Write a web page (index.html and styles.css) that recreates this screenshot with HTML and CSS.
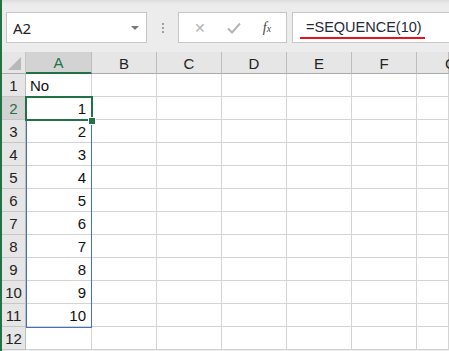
FILE: index.html
```html
<!DOCTYPE html>
<html lang="ja">
<head>
  <meta charset="UTF-8">
  <title>SEQUENCE</title>
  <link rel="stylesheet" href="styles.css">
</head>
<body>
<div class="app">
  <div class="edge"></div>
  <div class="main">
    <div class="formula-bar">
      <div class="name-box">
        <span class="name">A2</span>
        <span class="arrow"></span>
      </div>
      <div class="grip"><i></i><i></i><i></i></div>
      <div class="buttons">
        <span class="btn cancel">&#x2715;</span>
        <svg class="btn check" width="14" height="12" viewBox="0 0 14 12"><path d="M1 6.5 L5 10.5 L13 1.5" fill="none" stroke="#b5b5b5" stroke-width="2"/></svg>
        <span class="btn fx">f<sub>x</sub></span>
      </div>
      <div class="formula">
        <span class="formula-text">=SEQUENCE(10)</span>
      </div>
    </div>

    <div class="sheet">
      <div class="grid">
        <div class="corner"><span class="tri"></span></div>
        <div class="col-head active">A</div>
        <div class="col-head">B</div>
        <div class="col-head">C</div>
        <div class="col-head">D</div>
        <div class="col-head">E</div>
        <div class="col-head">F</div>
        <div class="col-head last">G</div>

        <div class="row-head">1</div><div class="cell">No</div><div class="cell"></div><div class="cell"></div><div class="cell"></div><div class="cell"></div><div class="cell"></div><div class="cell"></div>
        <div class="row-head active">2</div><div class="cell num">1</div><div class="cell"></div><div class="cell"></div><div class="cell"></div><div class="cell"></div><div class="cell"></div><div class="cell"></div>
        <div class="row-head">3</div><div class="cell num">2</div><div class="cell"></div><div class="cell"></div><div class="cell"></div><div class="cell"></div><div class="cell"></div><div class="cell"></div>
        <div class="row-head">4</div><div class="cell num">3</div><div class="cell"></div><div class="cell"></div><div class="cell"></div><div class="cell"></div><div class="cell"></div><div class="cell"></div>
        <div class="row-head">5</div><div class="cell num">4</div><div class="cell"></div><div class="cell"></div><div class="cell"></div><div class="cell"></div><div class="cell"></div><div class="cell"></div>
        <div class="row-head">6</div><div class="cell num">5</div><div class="cell"></div><div class="cell"></div><div class="cell"></div><div class="cell"></div><div class="cell"></div><div class="cell"></div>
        <div class="row-head">7</div><div class="cell num">6</div><div class="cell"></div><div class="cell"></div><div class="cell"></div><div class="cell"></div><div class="cell"></div><div class="cell"></div>
        <div class="row-head">8</div><div class="cell num">7</div><div class="cell"></div><div class="cell"></div><div class="cell"></div><div class="cell"></div><div class="cell"></div><div class="cell"></div>
        <div class="row-head">9</div><div class="cell num">8</div><div class="cell"></div><div class="cell"></div><div class="cell"></div><div class="cell"></div><div class="cell"></div><div class="cell"></div>
        <div class="row-head">10</div><div class="cell num">9</div><div class="cell"></div><div class="cell"></div><div class="cell"></div><div class="cell"></div><div class="cell"></div><div class="cell"></div>
        <div class="row-head">11</div><div class="cell num">10</div><div class="cell"></div><div class="cell"></div><div class="cell"></div><div class="cell"></div><div class="cell"></div><div class="cell"></div>
        <div class="row-head">12</div><div class="cell"></div><div class="cell"></div><div class="cell"></div><div class="cell"></div><div class="cell"></div><div class="cell"></div><div class="cell"></div>
      </div>

      <!-- spill range A2:A11 and active cell -->
      <div class="spill"></div>
      <div class="selection"></div>
      <div class="handle"></div>
    </div>
  </div>
</div>
</body>
</html>
```

FILE: styles.css
```css
body {
  margin: 0;
  font-family: "Liberation Sans", Arial, "Noto Sans CJK JP", sans-serif;
  background: #ffffff;
}

.app {
  display: flex;
  width: 449px;
  height: 351px;
  overflow: hidden;
}

.edge {
  width: 2px;
  background: #217346;
  flex-shrink: 0;
}

.main {
  flex: 1;
  display: flex;
  flex-direction: column;
  background: linear-gradient(#dcdcdc, #ececec 4px, #ececec);
  min-width: 0;
}

/* formula bar */
.formula-bar {
  display: flex;
  align-items: stretch;
  height: 31px;
  margin-top: 12px;
  padding-left: 4px;
}

.formula-bar > div {
  box-sizing: border-box;
  flex-shrink: 0;
}

.name-box {
  width: 141px;
  background: #fff;
  border: 1px solid #c6c6c6;
  display: flex;
  align-items: center;
  justify-content: space-between;
  padding: 0 6px;
}

.name {
  font-family: "Noto Sans", "Liberation Sans", sans-serif;
  font-size: 15px;
  color: #222;
  margin-top: 1px;
}

.arrow {
  width: 0;
  height: 0;
  border-left: 4px solid transparent;
  border-right: 4px solid transparent;
  border-top: 4px solid #777;
  margin-right: 1px;
}

.grip {
  width: 31px;
  display: flex;
  flex-direction: column;
  align-items: center;
  justify-content: center;
  gap: 2px;
}

.grip i {
  width: 2px;
  height: 2px;
  background: #a0a0a0;
}

.buttons {
  width: 109px;
  background: #fff;
  border: 1px solid #c6c6c6;
  display: flex;
  align-items: center;
  justify-content: space-around;
  padding: 0 4px;
}

.btn {
  color: #b5b5b5;
}

.cancel {
  font-size: 14px;
}

.fx {
  font-family: "Liberation Serif", serif;
  font-style: italic;
  font-size: 14px;
  color: #444;
}

.fx sub {
  font-size: 10px;
  vertical-align: 0;
}

.formula-bar > .formula {
  flex: 1;
  flex-shrink: 1;
  margin-left: 5px;
  background: #fff;
  border: 1px solid #c6c6c6;
  border-right: none;
  display: flex;
  align-items: center;
  padding-left: 7px;
}

.formula-text {
  font-size: 14.5px;
  color: #1f2a3a;
  border-bottom: 2px solid #e8131b;
  padding: 0 3px 2px 6px;
  margin-top: 3px;
}

/* sheet */
.sheet {
  position: relative;
  margin-top: 9px;
  flex: 1;
}

.grid {
  display: grid;
  grid-template-columns: 24px 66px repeat(5, 65px) 32px;
  grid-template-rows: 22px repeat(12, 23px);
  background: #fff;
}

.corner,
.col-head,
.row-head {
  background: #e6e6e6;
  color: #222;
  font-size: 15px;
  display: flex;
  align-items: center;
  justify-content: center;
  box-sizing: border-box;
}

.corner {
  border-right: 1px solid #c6c6c6;
  border-bottom: 1px solid #ababab;
  position: relative;
}

.tri {
  position: absolute;
  right: 4px;
  bottom: 3px;
  width: 0;
  height: 0;
  border-left: 13px solid transparent;
  border-bottom: 13px solid #b8b8b8;
}

.col-head {
  border-right: 1px solid #bdbdbd;
  border-bottom: 1px solid #ababab;
  padding-top: 1px;
}

.col-head.active {
  background: #d3d3d3;
  color: #217346;
  border-bottom: 2px solid #217346;
}

.col-head.last {
  justify-content: flex-start;
  padding-left: 28px;
}

.row-head {
  border-right: 1px solid #bdbdbd;
  border-bottom: 1px solid #c6c6c6;
}

.row-head.active {
  background: #d3d3d3;
  color: #217346;
}

.cell {
  border-right: 1px solid #d4d4d4;
  border-bottom: 1px solid #d4d4d4;
  box-sizing: border-box;
  font-size: 15px;
  color: #111;
  display: flex;
  align-items: center;
  padding: 0 4px;
}

.cell.num {
  justify-content: flex-end;
  padding-right: 5px;
}

.spill {
  position: absolute;
  left: 24px;
  top: 45px;
  width: 66px;
  height: 231px;
  border: 1px solid #3f6fc6;
  box-sizing: border-box;
}

.selection {
  position: absolute;
  left: 23px;
  top: 44px;
  width: 68px;
  height: 25px;
  border: 2px solid #217346;
  box-sizing: border-box;
}

.handle {
  position: absolute;
  left: 86px;
  top: 65px;
  width: 6px;
  height: 6px;
  background: #217346;
  border: 1px solid #fff;
}
```
